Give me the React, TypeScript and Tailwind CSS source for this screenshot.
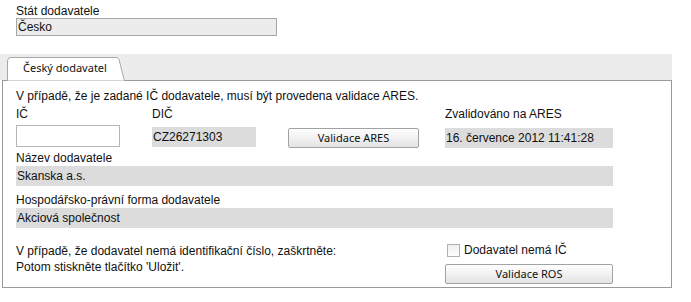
import React from "react";

const label = "block h-[14px] leading-[14px] text-[12px] text-[#111]";
const field = "h-[20px] bg-[#dcdcdc] px-[1px] leading-[20px] text-[12px] text-[#111]";
const button =
  "h-[20px] rounded-[2px] border border-[#a3a3a3] bg-gradient-to-b from-[#ffffff] to-[#e3e3e3] text-[11px] text-[#111] [font-family:'Noto_Sans',sans-serif] leading-[18px]";

export default function App() {
  return (
    <div className="h-[302px] w-[691px] bg-white [font-family:'Liberation_Sans',Arial,sans-serif]">
      <div className="px-[16px] pt-[4px]">
        <span className={label}>Stát dodavatele</span>
        <div className="h-[18px] w-[261px] border border-[#a6a6a6] bg-[#ececec] pl-[1px] text-[12px] leading-[16px] text-[#111]">
          Česko
        </div>
      </div>

      <div className="mt-[18px] flex h-[26px] w-[672px] items-end bg-[#ececec]">
        <div className="relative ml-[7px] h-[23px] w-[118px]">
          <svg className="absolute inset-0" width="118" height="24" viewBox="0 0 118 24">
            <path d="M0.5 24 L0.5 4 Q0.5 0.5 4 0.5 L109 0.5 Q111 0.5 112 2.5 L117.5 24 Z" fill="#ffffff" stroke="#a8a8a8" />
          </svg>
          <span className="relative block pl-[16px] pt-[3px] text-[11px] leading-[16px] text-[#111] [font-family:'Noto_Sans',sans-serif]">
            Český dodavatel
          </span>
        </div>
      </div>

      <div className="ml-[2px] h-[208px] w-[670px] border border-[#9a9a9a] px-[13px] pt-[8px]">
        <p className="text-[12px] leading-[14px] text-[#111]">
          V případě, že je zadané IČ dodavatele, musí být provedena validace ARES.
        </p>

        <div className="mt-[4px] flex items-start">
          <div className="flex w-[136px] flex-col">
            <span className={label}>IČ</span>
            <input className="mt-[4px] h-[22px] w-[104px] border border-[#b5b5b5] bg-white" readOnly />
          </div>
          <div className="flex w-[136px] flex-col">
            <span className={label}>DIČ</span>
            <div className={`${field} mt-[6px] w-[104px]`}>CZ26271303</div>
          </div>
          <div className="flex w-[157px] flex-col pt-[21px]">
            <button className={`${button} w-[131px]`}>Validace ARES</button>
          </div>
          <div className="flex w-[168px] flex-col">
            <span className={label}>Zvalidováno na ARES</span>
            <div className={`${field} mt-[7px] w-[168px]`}>16. července 2012 11:41:28</div>
          </div>
        </div>

        <div className="mt-[3px]">
          <span className={label}>Název dodavatele</span>
          <div className={`${field} mt-[1px] w-[597px]`}>Skanska a.s.</div>
        </div>

        <div className="mt-[7px]">
          <span className={label}>Hospodářsko-právní forma dodavatele</span>
          <div className={`${field} mt-[1px] w-[597px]`}>Akciová společnost</div>
        </div>

        <div className="mt-[15px] flex">
          <div className="w-[429px] text-[12px] leading-[16px] text-[#111]">
            <p>V případě, že dodavatel nemá identifikační číslo, zaškrtněte:</p>
            <p>Potom stiskněte tlačítko 'Uložit'.</p>
          </div>
          <div className="flex w-[168px] flex-col">
            <label className="ml-[2px] flex items-center gap-[4px] text-[12px] leading-[15px] text-[#111]">
              <span className="h-[13px] w-[13px] border border-[#b0b0b0] bg-gradient-to-b from-[#f0f0f0] to-[#fdfdfd]" />
              Dodavatel nemá IČ
            </label>
            <button className={`${button} mt-[6px] h-[19px] w-[168px]`}>Validace ROS</button>
          </div>
        </div>
      </div>
    </div>
  );
}
